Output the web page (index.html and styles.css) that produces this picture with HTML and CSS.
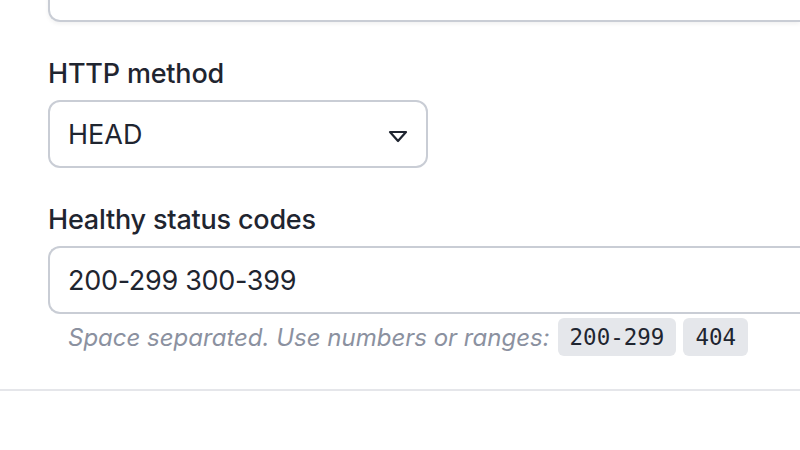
FILE: index.html
```html
<!DOCTYPE html>
<html lang="en">
<head>
  <meta charset="UTF-8" />
  <title>Health check</title>
  <link rel="stylesheet" href="styles.css">
</head>
<body>

<div class="form">
  <div class="input input-top"></div>

  <div class="field">
    <label class="label">HTTP method</label>
    <div class="select">
      <span>HEAD</span>
      <svg class="caret" width="20" height="13" viewBox="0 0 20 13">
        <path d="M2 2 L18 2 L10 11 Z" fill="none" stroke="#1f2530" stroke-width="2.2" stroke-linejoin="round"/>
      </svg>
    </div>
  </div>

  <div class="field">
    <label class="label">Healthy status codes</label>
    <div class="input">200-299 300-399</div>
    <div class="hint">
      Space separated. Use numbers or ranges:
      <code class="chip">200-299</code>
      <code class="chip">404</code>
    </div>
  </div>
</div>

<div class="divider"></div>

</body>
</html>
```

FILE: styles.css
```css
body {
  margin: 0;
  background-color: #fff;
  font-family: Inter, "Noto Sans", sans-serif;
  color: #1f2530;
  overflow: hidden;
}

.form {
  padding-left: 48px;
  margin-top: -46px;
}

/* wide inputs run on past the right edge of the window */
.input {
  box-sizing: border-box;
  height: 68px;
  border: 2px solid #c9cdd5;
  border-right: none;
  border-radius: 12px 0 0 12px;
  padding: 0 18px;
  display: flex;
  align-items: center;
  font-size: 27px;
  letter-spacing: -0.3px;
}

.input-top {
  box-shadow: 0 2px 4px rgba(0, 0, 0, 0.06);
}

.field {
  margin-top: 34px;
}

.label {
  display: block;
  font-size: 27px;
  font-weight: 500;
  line-height: 36px;
  margin-bottom: 8px;
  letter-spacing: -0.2px;
}

.select {
  box-sizing: border-box;
  width: 380px;
  height: 68px;
  border: 2px solid #c9cdd5;
  border-radius: 12px;
  padding: 0 18px 0 18px;
  display: flex;
  align-items: center;
  justify-content: space-between;
  font-size: 27px;
}

.caret {
  margin-top: 4px;
}

.hint {
  margin-top: 4px;
  padding-left: 20px;
  display: flex;
  align-items: center;
  gap: 7px;
  font-size: 24px;
  font-style: italic;
  color: #8b91a0;
}

.hint .chip:first-of-type {
  margin-left: 1px;
}

.chip {
  font-family: "DejaVu Sans Mono", monospace;
  font-style: normal;
  font-size: 22.5px;
  color: #1f2530;
  background-color: #e5e7eb;
  border-radius: 6px;
  padding: 0 12px;
  height: 38px;
  line-height: 38px;
}

.divider {
  margin-top: 33px;
  height: 2px;
  background-color: #e5e6ea;
}
```
